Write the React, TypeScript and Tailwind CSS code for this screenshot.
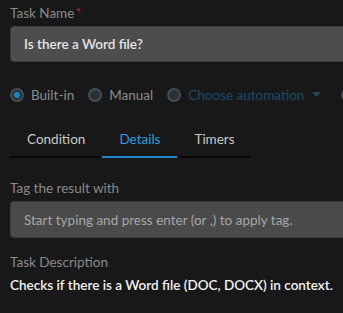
import { useState } from "react";

function Radio({ checked, label }: { checked?: boolean; label: string }) {
  return (
    <label className="flex items-center gap-[7px] shrink-0">
      <span className="w-[14px] h-[14px] rounded-full border-2 border-[#454d55] bg-[#2b3036] flex items-center justify-center">
        {checked ? <span className="w-[6px] h-[6px] rounded-full bg-[#1b86c4]" /> : null}
      </span>
      <span className="text-[#8c8c8c]">{label}</span>
    </label>
  );
}

export default function App() {
  const [tab, setTab] = useState("Details");
  const tabs = ["Condition", "Details", "Timers"];

  return (
    <div className="w-[343px] h-[313px] overflow-hidden bg-[#181818] pl-[10px] pt-[4px] text-[13.5px] leading-[18px] font-['Lato',sans-serif]">
      <div className="text-[#8a8a8a]">
        Task Name<span className="text-[#e02424] align-top text-[11px] ml-[2px]">*</span>
      </div>
      <div className="mt-[4px] h-[36px] w-[360px] rounded-[4px] bg-[#4d4d4d] border border-[#3c3c3c] flex items-center px-[13px] text-[#e6e6e6] font-semibold">
        Is there a Word file?
      </div>

      <div className="mt-[25px] flex items-center gap-[14px] h-[16px] w-[360px] whitespace-nowrap">
        <Radio checked label="Built-in" />
        <Radio label="Manual" />
        <label className="flex items-center gap-[7px] shrink-0">
          <span className="w-[14px] h-[14px] rounded-full border-2 border-[#454d55] bg-[#2b3036]" />
          <span className="text-[#1e4a66]">Choose automation</span>
          <svg width="9" height="6" viewBox="0 0 9 6" className="ml-[1px]">
            <path d="M0 0 L9 0 L4.5 5 Z" fill="#1e4a66" />
          </svg>
        </label>
        <span className="ml-[6px] w-[14px] h-[14px] rounded-full border-2 border-[#454d55] bg-[#2b3036] shrink-0" />
      </div>

      <div className="mt-[27px] w-[240px] flex border-b-2 border-[#050505]">
        {tabs.map((t) => (
          <button
            key={t}
            onClick={() => setTab(t)}
            className={
              "px-[17px] pb-[8px] -mb-[2px] border-b-2 leading-[18px] " +
              (tab === t ? "text-[#2a9ee0] border-[#1c8acb]" : "text-[#c8c8c8] border-transparent")
            }
          >
            {t}
          </button>
        ))}
      </div>

      <div className="mt-[21px] text-[#8a8a8a]">Tag the result with</div>
      <div className="mt-[4px] h-[37px] w-[360px] rounded-[4px] bg-[#4a4a4a] border border-[#3c3c3c] flex items-center px-[13px] text-[#a6a6a6]">
        Start typing and press enter (or ,) to apply tag.
      </div>

      <div className="mt-[15px] text-[#8a8a8a]">Task Description</div>
      <div className="mt-[5px] text-[#f2f2f2] font-semibold">
        Checks if there is a Word file (DOC, DOCX) in context.
      </div>
    </div>
  );
}
